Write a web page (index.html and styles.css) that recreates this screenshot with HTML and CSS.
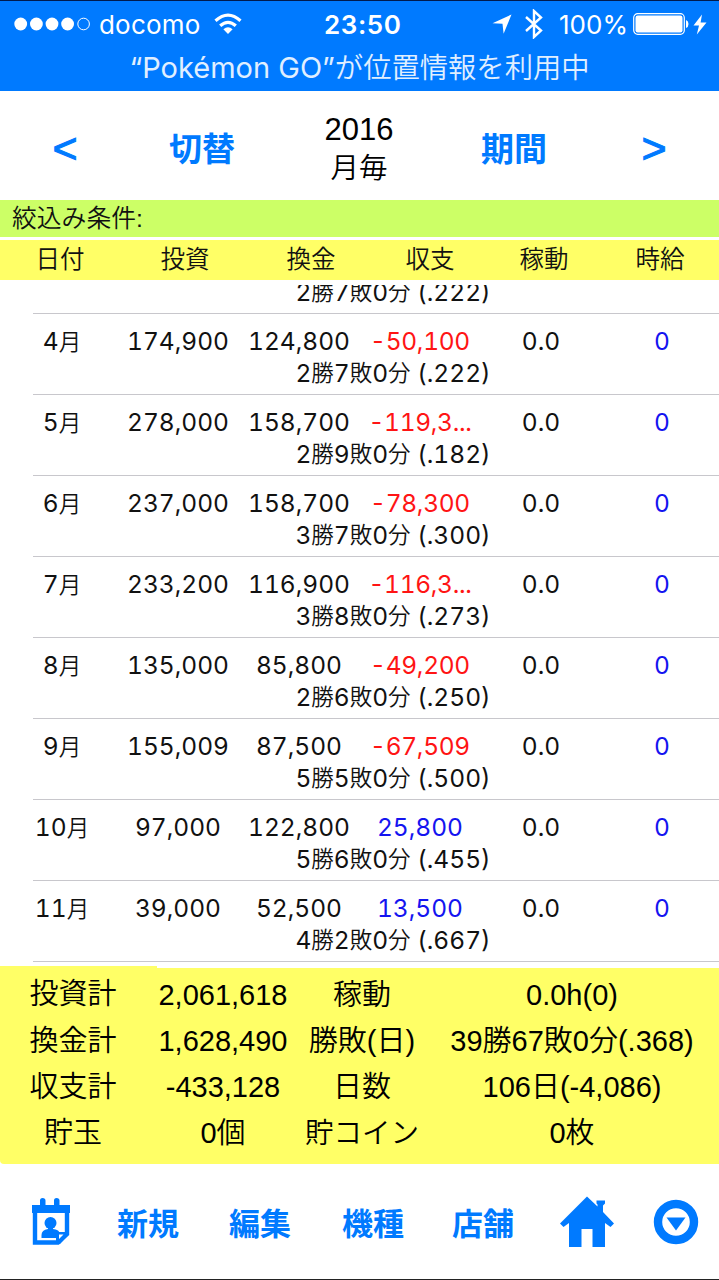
FILE: index.html
```html
<!DOCTYPE html>
<html lang="ja">
<head>
    <meta charset="UTF-8">
    <meta name="viewport" content="width=device-width, initial-scale=1.0">
    <title>月毎収支</title>
    <link rel="stylesheet" href="styles.css">
</head>
<body>

    <header class="status-bar">
        <div class="status-row">
            <div class="status-left">
                <svg class="signal" width="77" height="14" viewBox="0 0 77 14" fill="#fff">
                    <circle cx="6.7" cy="7" r="6.4"/>
                    <circle cx="22.4" cy="7" r="6.4"/>
                    <circle cx="38" cy="7" r="6.4"/>
                    <circle cx="53.6" cy="7" r="6.4"/>
                    <circle cx="69.6" cy="7" r="5.8" fill="none" stroke="#fff" stroke-width="1"/>
                </svg>
                <span class="carrier">docomo</span>
                <svg class="wifi" width="28" height="22" viewBox="0 0 28 22" fill="none" stroke="#fff" stroke-width="3.2">
                    <path d="M1.500 7.800 Q14 -3.400 26.500 7.800"/>
                    <path d="M6.200 12.800 Q14 5.800 21.800 12.800"/>
                    <path d="M14 21 L9.400 16.200 Q14 12.200 18.600 16.200 Z" fill="#fff" stroke="none"/>
                </svg>
            </div>
            <span class="clock">23:50</span>
            <div class="status-right">
                <svg width="20" height="20" viewBox="0 0 20 20" fill="#fff">
                    <path d="M19.500 0.500 L0.500 9.300 L10.500 9.800 L11.600 19.800 Z"/>
                </svg>
                <svg class="bluetooth" width="18" height="30" viewBox="0 0 18 30" fill="none" stroke="#fff" stroke-width="2.400">
                    <path d="M1 8 L16 21.500 L9 28 V2 L16 8.500 L1 22"/>
                </svg>
                <span class="percent">100%</span>
                <svg class="battery" width="56" height="22" viewBox="0 0 56 22">
                    <rect x="0.700" y="0.700" width="50.600" height="20.600" rx="4" fill="none" stroke="#fff" stroke-width="1.200"/>
                    <rect x="2.500" y="2.500" width="47" height="17" rx="2.200" fill="#fff"/>
                    <path d="M53 7 Q55.500 8 55.500 11 Q55.500 14 53 15 Z" fill="#fff"/>
                </svg>
                <svg class="bolt" width="14" height="21" viewBox="0 0 14 21" fill="#fff">
                    <path d="M9 0.500 L0.500 11.500 H6 L3.800 20.500 L13.500 8.600 H7.600 Z"/>
                </svg>
            </div>
        </div>
        <div class="location-notice">“Pokémon GO”<span class="notice-jp">が位置情報を利用中</span></div>
    </header>

    <nav class="nav-bar">
        <a class="arrow">&lt;</a>
        <a>切替</a>
        <div class="period"><span>2016</span><span class="period-unit">月毎</span></div>
        <a>期間</a>
        <a class="arrow">&gt;</a>
    </nav>

    <div class="filter-bar">絞込み条件:</div>

    <div class="table-head">
        <span>日付</span><span>投資</span><span>換金</span><span>収支</span><span>稼動</span><span>時給</span>
    </div>

    <main class="month-list">
        <section class="month cut-off">
            <div class="record">2<i>勝</i>7<i>敗</i>0<i>分</i> (.222)</div>
        </section>
        <section class="month">
            <div class="figures"><span>4<i>月</i></span><span>174,900</span><span>124,800</span><span class="minus">-50,100</span><span>0.0</span><span class="plus">0</span></div>
            <div class="record">2<i>勝</i>7<i>敗</i>0<i>分</i> (.222)</div>
        </section>
        <section class="month">
            <div class="figures"><span>5<i>月</i></span><span>278,000</span><span>158,700</span><span class="minus">-119,3...</span><span>0.0</span><span class="plus">0</span></div>
            <div class="record">2<i>勝</i>9<i>敗</i>0<i>分</i> (.182)</div>
        </section>
        <section class="month">
            <div class="figures"><span>6<i>月</i></span><span>237,000</span><span>158,700</span><span class="minus">-78,300</span><span>0.0</span><span class="plus">0</span></div>
            <div class="record">3<i>勝</i>7<i>敗</i>0<i>分</i> (.300)</div>
        </section>
        <section class="month">
            <div class="figures"><span>7<i>月</i></span><span>233,200</span><span>116,900</span><span class="minus">-116,3...</span><span>0.0</span><span class="plus">0</span></div>
            <div class="record">3<i>勝</i>8<i>敗</i>0<i>分</i> (.273)</div>
        </section>
        <section class="month">
            <div class="figures"><span>8<i>月</i></span><span>135,000</span><span>85,800</span><span class="minus">-49,200</span><span>0.0</span><span class="plus">0</span></div>
            <div class="record">2<i>勝</i>6<i>敗</i>0<i>分</i> (.250)</div>
        </section>
        <section class="month">
            <div class="figures"><span>9<i>月</i></span><span>155,009</span><span>87,500</span><span class="minus">-67,509</span><span>0.0</span><span class="plus">0</span></div>
            <div class="record">5<i>勝</i>5<i>敗</i>0<i>分</i> (.500)</div>
        </section>
        <section class="month">
            <div class="figures"><span>10<i>月</i></span><span>97,000</span><span>122,800</span><span class="plus">25,800</span><span>0.0</span><span class="plus">0</span></div>
            <div class="record">5<i>勝</i>6<i>敗</i>0<i>分</i> (.455)</div>
        </section>
        <section class="month">
            <div class="figures"><span>11<i>月</i></span><span>39,000</span><span>52,500</span><span class="plus">13,500</span><span>0.0</span><span class="plus">0</span></div>
            <div class="record">4<i>勝</i>2<i>敗</i>0<i>分</i> (.667)</div>
        </section>
    </main>

    <section class="summary">
        <span class="raised">投資計</span><span>2,061,618</span><span>稼動</span><span>0.0h(0)</span>
        <span>換金計</span><span>1,628,490</span><span>勝敗(日)</span><span>39勝67敗0分(.368)</span>
        <span>収支計</span><span>-433,128</span><span>日数</span><span>106日(-4,086)</span>
        <span>貯玉</span><span>0個</span><span class="coin">貯コイン</span><span>0枚</span>
    </section>

    <footer class="toolbar">
        <a>
            <svg width="40" height="48" viewBox="0 0 40 48">
                <path d="M1 7 H9 V2.500 Q9 0 11.500 0 Q14.500 0 14.500 2.500 V7 H23 V2.500 Q23 0 25.500 0 Q28.500 0 28.500 2.500 V7 H39 V15 H1 Z" fill="#007aff"/>
                <path d="M4 12 V44.500 H27 L36 36 V12" fill="none" stroke="#007aff" stroke-width="4.400"/>
                <path d="M25 46 V34 H37 V37 L29 46 Z" fill="#007aff"/>
                <path d="M28 41 V36.500 H32.500 Z" fill="#fff"/>
                <circle cx="19.500" cy="25" r="6" fill="#007aff"/>
                <path d="M17 28 H22 V31 Q28 32 28 34 L25 40 H10.500 V37 Q10.500 32 17 31 Z" fill="#007aff"/>
            </svg>
        </a>
        <a>新規</a>
        <a>編集</a>
        <a>機種</a>
        <a>店舗</a>
        <a>
            <svg width="56" height="52" viewBox="0 0 56 52" fill="#007aff">
                <path d="M28 0.500 L38.500 10.500 V8.500 L37.500 7.500 V4.500 H46 V7.500 L44 9.500 V16 L55 27.500 L51.500 31 L46 27 V51 H33.500 V33 H22.500 V51 H10 V27 L4.500 31 L1 27.500 Z"/>
            </svg>
        </a>
        <a>
            <svg width="46" height="46" viewBox="0 0 46 46">
                <circle cx="23" cy="23" r="18" fill="none" stroke="#007aff" stroke-width="8.400"/>
                <path d="M13.500 18.500 H32.500 L23 31.500 Z" fill="#007aff"/>
            </svg>
        </a>
    </footer>

</body>
</html>
```

FILE: styles.css
```css
body {
    margin: 0;
    width: 719px;
    height: 1280px;
    box-sizing: border-box;
    border-bottom: 1px solid #222;
    display: flex;
    flex-direction: column;
    overflow: hidden;
    background-color: #fff;
    color: #111;
    font-family: "Liberation Sans", "Noto Sans CJK JP", sans-serif;
    font-weight: 350;
    white-space: nowrap;
}
svg { display: block; flex-shrink: 0; }

/* --- Status bar --- */
.status-bar {
    box-sizing: border-box;
    height: 91px;
    border-top: 1px solid #001a4d;
    background-color: #007aff;
    color: #fff;
    font-family: Inter, "Noto Sans CJK JP", sans-serif;
    font-weight: 400;
}
.status-row {
    display: grid;
    grid-template-columns: 324px 78px 1fr;
    height: 46px;
    align-items: center;
}
.status-left { display: flex; align-items: center; padding-left: 14px; }
.carrier { font-size: 26px; letter-spacing: 0.2px; margin-left: 8px; width: 115px; }
.clock { font-size: 26px; font-weight: 600; letter-spacing: 0.6px; }
.status-right { display: flex; align-items: center; padding-left: 90px; }
.bluetooth { margin-left: 13px; }
.percent { font-size: 26px; width: 74px; margin-left: 16px; }
.bolt { margin-left: 4px; }
.location-notice {
    height: 40px;
    line-height: 42px;
    text-align: center;
    font-size: 29px;
    color: #e0efff;
}
.notice-jp { font-size: 28.3px; font-weight: 350; }

/* --- Navigation --- */
.nav-bar {
    display: grid;
    grid-template-columns: 130px 144px 170px 140px 140px;
    height: 109px;
    align-items: center;
    text-align: center;
}
.nav-bar a {
    color: #007aff;
    font-size: 33px;
    font-weight: bold;
    padding-top: 2px;
}
.nav-bar .arrow {
    font-size: 43px;
    font-weight: normal;
    padding-top: 6px;
    -webkit-text-stroke: 1px #007aff;
}
.period {
    display: flex;
    flex-direction: column;
    font-size: 31px;
    line-height: 39px;
    padding-top: 7px;
    color: #000;
}
.period-unit { font-size: 28.5px; }

.filter-bar {
    height: 37px;
    line-height: 37px;
    margin-bottom: 3px;
    padding-left: 12px;
    font-size: 24.8px;
    background-color: #ccff66;
}
.table-head {
    display: grid;
    grid-template-columns: 120px 130px 122px 116px 112px 120px;
    height: 40px;
    line-height: 39px;
    text-align: center;
    font-size: 24.5px;
    background-color: #ffff66;
}

/* --- Month rows --- */
.month-list {
    height: 683px;
    margin-top: 5px;
    flex-shrink: 0;
    overflow: hidden;
    font-family: Inter, "Noto Sans CJK JP", sans-serif;
    font-size: 24.5px;
    font-weight: 400;
    font-variant-numeric: tabular-nums;
}
.month {
    box-sizing: border-box;
    height: 81px;
    padding-top: 12px;
    display: flex;
    flex-direction: column;
    background: linear-gradient(#c8c7cc, #c8c7cc) no-repeat 33px 80px / 100% 1px;
}
.month i {
    font-style: normal;
    font-size: 22.5px;
    font-weight: 350;
    line-height: 1;
    vertical-align: 1px;
}
.figures {
    display: grid;
    grid-template-columns: 124px 108px 134px 108px 134px 108px;
    height: 32px;
    line-height: 30px;
    text-align: center;
}
.figures span { display: flex; justify-content: center; }
.figures i { line-height: 31px; }
.record { line-height: 31px; text-align: center; padding-left: 67px; }
/* the first row is scrolled partly under the table head */
.cut-off { margin-top: -52px; padding-top: 44px; }
.minus { color: #ff1414; letter-spacing: -0.3px; }
.plus { color: #1414f0; }

/* --- Totals --- */
.summary {
    position: relative;
    box-sizing: border-box;
    display: grid;
    grid-template-columns: 146px 154px 124px 296px;
    grid-auto-rows: 46px;
    height: 196px;
    padding-top: 4px;
    flex-shrink: 0;
    line-height: 47px;
    text-align: center;
    font-size: 29px;
    color: #000;
    background-color: #ffff66;
    border-bottom-left-radius: 4px;
}
/* the first label sits on a slightly taller cell */
.summary::before {
    content: "";
    position: absolute;
    left: 0;
    top: -2px;
    width: 157px;
    height: 2px;
    background-color: #ffff66;
}
.raised { line-height: 44px; }
.coin { font-size: 28.5px; }

/* --- Bottom toolbar --- */
.toolbar {
    display: grid;
    grid-template-columns: 102px 92px 132px 94px 126px 82px 96px;
    height: 115px;
    align-items: center;
    text-align: center;
}
.toolbar a {
    display: flex;
    justify-content: center;
    color: #007aff;
    font-size: 31px;
    font-weight: bold;
}
```
